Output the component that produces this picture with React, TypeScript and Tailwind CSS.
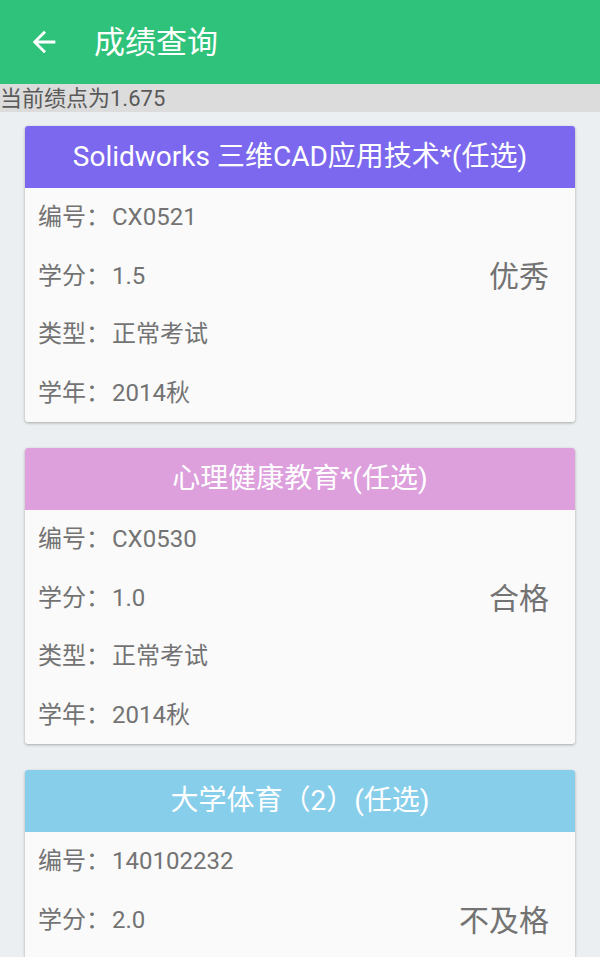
import React from "react";

interface ICourse {
  name: string;
  code: string;
  credit: string;
  type: string;
  term: string;
  grade: string;
  color: string;
}

const courses: ICourse[] = [
  {
    name: "Solidworks 三维CAD应用技术*(任选)",
    code: "CX0521",
    credit: "1.5",
    type: "正常考试",
    term: "2014秋",
    grade: "优秀",
    color: "bg-[#7b68ee]",
  },
  {
    name: "心理健康教育*(任选)",
    code: "CX0530",
    credit: "1.0",
    type: "正常考试",
    term: "2014秋",
    grade: "合格",
    color: "bg-[#dda0dd]",
  },
  {
    name: "大学体育（2）(任选)",
    code: "140102232",
    credit: "2.0",
    type: "正常考试",
    term: "2014秋",
    grade: "不及格",
    color: "bg-[#87ceeb]",
  },
];

function CourseCard({ course }: Readonly<{ course: ICourse }>) {
  const rows = [
    ["编号：", course.code],
    ["学分：", course.credit],
    ["类型：", course.type],
    ["学年：", course.term],
  ];

  return (
    <div className="rounded-[3px] overflow-hidden bg-[#fafafa] shadow-[0_1px_3px_rgba(0,0,0,0.3)] shrink-0">
      <div
        className={`${course.color} h-[62px] flex items-center justify-center text-white text-[28px]`}
      >
        {course.name}
      </div>
      <div className="flex items-center">
        <div className="flex-1 flex flex-col pl-[13px]">
          {rows.map(([label, value]) => (
            <div key={label} className="h-[58.5px] flex items-center text-[24px] text-[#737373]">
              <span>{label}</span>
              <span className="ml-[2px]">{value}</span>
            </div>
          ))}
        </div>
        <div className="pr-[26px] text-[30px] text-[#737373] -mt-[58px]">{course.grade}</div>
      </div>
    </div>
  );
}

export default function App() {
  return (
    <div
      className="w-[600px] h-[957px] overflow-hidden bg-[#eceff1] flex flex-col"
      style={{ fontFamily: 'Roboto, "Noto Sans CJK SC", sans-serif' }}
    >
      <div className="h-[84px] bg-[#2fc27a] flex items-center shrink-0">
        <svg viewBox="0 0 24 24" className="w-[34px] h-[34px] ml-[27px] fill-white">
          <path d="M20 11H7.83l5.59-5.59L12 4l-8 8 8 8 1.41-1.41L7.83 13H20v-2z" />
        </svg>
        <span className="ml-[33px] text-white text-[31px] leading-none">成绩查询</span>
      </div>
      <div className="h-[28px] bg-[#dcdcdc] flex items-center text-[22px] text-[#5a5a5a] shrink-0">
        当前绩点为1.675
      </div>
      <div className="flex flex-col gap-[26px] px-[25px] pt-[14px]">
        {courses.map((course) => (
          <CourseCard key={course.code} course={course} />
        ))}
      </div>
    </div>
  );
}
